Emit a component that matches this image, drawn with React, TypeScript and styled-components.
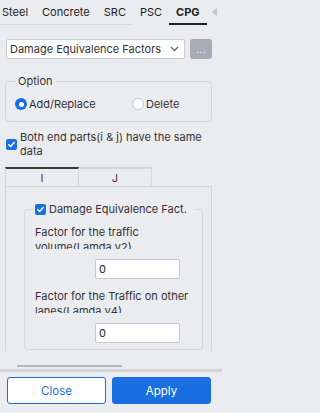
import React from "react";
import styled, { createGlobalStyle } from "styled-components";

const Global = createGlobalStyle`
  html, body { margin: 0; padding: 0; background: #ebecf0; }
  body { font-family: Inter, "Noto Sans", Arial, sans-serif; color: #333; }
  * { box-sizing: border-box; }
`;

const Page = styled.div`
  width: 222px;
  height: 413px;
  display: flex;
  flex-direction: column;
  background: #ebecf0;
  overflow: hidden;
  font-size: 11px;
`;

const TabBar = styled.div`
  height: 25px;
  display: flex;
  align-items: stretch;
  position: relative;
  flex-shrink: 0;
`;

const TabStrip = styled.div`
  display: flex;
  margin-left: -5px;
`;

const Tab = styled.div<{ $active?: boolean; $lined?: boolean }>`
  padding: 0 7px;
  display: flex;
  align-items: center;
  font-size: 11px;
  font-weight: ${(p) => (p.$active ? 700 : 400)};
  color: #222;
  border-bottom: ${(p) =>
    p.$active ? "2px solid #222" : p.$lined ? "1px solid #d9dadd" : "1px solid transparent"};
  padding-bottom: ${(p) => (p.$active ? 0 : 1)}px;
`;

const ScrollArrow = styled.div`
  position: absolute;
  right: 5px;
  top: 8px;
  width: 0;
  height: 0;
  border-top: 4px solid transparent;
  border-bottom: 4px solid transparent;
  border-right: 5px solid #c4c5c9;
`;

const Body = styled.div`
  flex: 1;
  display: flex;
  flex-direction: column;
  overflow: hidden;
`;

const ScrollArea = styled.div`
  height: 326px;
  overflow: hidden;
  padding: 14px 10px 0 5px;
  flex-shrink: 0;
`;

const SelectRow = styled.div`
  display: flex;
  gap: 5px;
  padding-left: 1px;
`;

const Select = styled.div`
  width: 180px;
  height: 20px;
  background: #fff;
  border: 1px solid #c9cacf;
  border-radius: 2px;
  display: flex;
  align-items: center;
  padding: 0 5px 0 3px;
  font-size: 11px;
  color: #333;
  justify-content: space-between;
  white-space: nowrap;
`;

const MoreButton = styled.div`
  width: 22px;
  height: 20px;
  background: #a7abb3;
  border-radius: 3px;
  color: #fff;
  font-size: 10px;
  display: flex;
  align-items: center;
  justify-content: center;
  letter-spacing: 0.3px;
`;

const Group = styled.fieldset`
  margin: 15px 0 0 0;
  padding: 9px 9px 10px 9px;
  border: 1px solid #d5d6da;
  border-radius: 4px;
  min-width: 0;
`;

const Legend = styled.legend`
  padding: 0 3px;
  font-size: 11px;
  color: #333;
  line-height: 14px;
`;

const RadioRow = styled.div`
  display: flex;
  align-items: center;
`;

const RadioItem = styled.label<{ $width?: number }>`
  display: flex;
  align-items: center;
  gap: 2px;
  width: ${(p) => (p.$width ? `${p.$width}px` : "auto")};
  font-size: 11px;
  line-height: 14px;
  color: #333;
`;

const RadioDot = styled.span<{ $checked?: boolean }>`
  width: 12px;
  height: 12px;
  border-radius: 50%;
  background: ${(p) => (p.$checked ? "#1a6fe0" : "#fff")};
  border: ${(p) => (p.$checked ? "none" : "1px solid #c9cacf")};
  display: flex;
  align-items: center;
  justify-content: center;
  &::after {
    content: "";
    display: ${(p) => (p.$checked ? "block" : "none")};
    width: 5px;
    height: 5px;
    border-radius: 50%;
    background: #fff;
  }
`;

const CheckRow = styled.label`
  display: flex;
  align-items: center;
  gap: 3px;
  margin-top: 8px;
  margin-left: 1px;
  font-size: 11px;
  line-height: 14px;
  color: #333;
`;

const CheckBox = styled.span`
  width: 11px;
  height: 11px;
  border-radius: 2px;
  background: #1a6fe0;
  flex-shrink: 0;
  display: flex;
  align-items: center;
  justify-content: center;
`;

const SubTabs = styled.div`
  display: flex;
  margin-top: 9px;
  width: 147px;
`;

const SubTab = styled.div<{ $active?: boolean }>`
  flex: 1;
  height: 19px;
  display: flex;
  align-items: center;
  justify-content: center;
  border-right: 1px solid #d5d6da;
  border-top: 2px solid ${(p) => (p.$active ? "#3a3a3a" : "#d5d6da")};
  border-left: ${(p) => (p.$active ? "1px solid #d5d6da" : "none")};
  font-size: 11px;
  color: #4a3550;
`;

const Panel = styled.div`
  border: 1px solid #d5d6da;
  border-bottom: none;
  padding: 15px 8px 0 18px;
  height: 180px;
`;

const Inner = styled.fieldset`
  margin: 0;
  padding: 9px 0 6px 10px;
  border: 1px solid #d5d6da;
  border-radius: 4px;
  min-width: 0;
`;

const InnerLegend = styled.legend`
  display: flex;
  align-items: center;
  gap: 3px;
  padding: 0 8px 0 1px;
  margin-left: -1px;
  font-size: 11px;
  line-height: 14px;
  color: #333;
  white-space: nowrap;
`;

const FieldLabel = styled.div`
  height: 24px;
  overflow: hidden;
  line-height: 15px;
  font-size: 11px;
  color: #333;
  padding-right: 4px;
`;

const FieldInput = styled.div`
  margin: 10px 0 0 60px;
  width: 85px;
  height: 20px;
  background: #fff;
  border: 1px solid #c9cacf;
  border-radius: 2px;
  display: flex;
  align-items: center;
  padding-left: 3px;
  font-size: 11px;
  color: #222;
`;

const FieldBlock = styled.div<{ $gap?: number }>`
  margin-top: ${(p) => p.$gap ?? 0}px;
`;

const HScroll = styled.div`
  height: 18px;
  display: flex;
  align-items: flex-end;
  padding: 0 0 2px 17px;
  flex-shrink: 0;
`;

const HThumb = styled.div`
  width: 105px;
  height: 2px;
  background: #b5b6ba;
`;

const Divider = styled.div`
  height: 3px;
  background: #d3d4d8;
  flex-shrink: 0;
`;

const Footer = styled.div`
  display: flex;
  gap: 6px;
  padding: 5px 11px 0 7px;
`;

const Button = styled.div<{ $primary?: boolean }>`
  flex: 1;
  height: 27px;
  border-radius: 3px;
  display: flex;
  align-items: center;
  justify-content: center;
  font-size: 11.5px;
  background: ${(p) => (p.$primary ? "#1a6fe0" : "#fff")};
  color: ${(p) => (p.$primary ? "#fff" : "#1a6fe0")};
  border: 1px solid #1a6fe0;
`;

const Check = () => (
  <svg width="9" height="9" viewBox="0 0 10 10">
    <path d="M2 5.2 L4.1 7.2 L8 2.8" fill="none" stroke="#fff" strokeWidth="1.7" strokeLinecap="round" strokeLinejoin="round" />
  </svg>
);

const Chevron = () => (
  <svg width="9" height="6" viewBox="0 0 9 6">
    <path d="M1 1 L4.5 4.5 L8 1" fill="none" stroke="#666" strokeWidth="1.3" />
  </svg>
);

export default function App() {
  return (
    <>
      <Global />
      <Page>
        <TabBar>
          <TabStrip>
            <Tab $lined>Steel</Tab>
            <Tab $lined>Concrete</Tab>
            <Tab $lined>SRC</Tab>
            <Tab>PSC</Tab>
            <Tab $active>CPG</Tab>
          </TabStrip>
          <ScrollArrow />
        </TabBar>
        <Body>
          <ScrollArea>
            <SelectRow>
              <Select>
                <span>Damage Equivalence Factors</span>
                <Chevron />
              </Select>
              <MoreButton>...</MoreButton>
            </SelectRow>
            <Group>
              <Legend>Option</Legend>
              <RadioRow>
                <RadioItem $width={117}>
                  <RadioDot $checked />
                  Add/Replace
                </RadioItem>
                <RadioItem>
                  <RadioDot />
                  Delete
                </RadioItem>
              </RadioRow>
            </Group>
            <CheckRow>
              <CheckBox>
                <Check />
              </CheckBox>
              <span>Both end parts(i &amp; j) have the same data</span>
            </CheckRow>
            <SubTabs>
              <SubTab $active>I</SubTab>
              <SubTab>J</SubTab>
            </SubTabs>
            <Panel>
              <Inner>
                <InnerLegend>
                  <CheckBox>
                    <Check />
                  </CheckBox>
                  Damage Equivalence Fact.
                </InnerLegend>
                <FieldBlock>
                  <FieldLabel>Factor for the traffic volume(Lamda v2)</FieldLabel>
                  <FieldInput>0</FieldInput>
                </FieldBlock>
                <FieldBlock $gap={10}>
                  <FieldLabel>Factor for the Traffic on other lanes(Lamda v4)</FieldLabel>
                  <FieldInput>0</FieldInput>
                </FieldBlock>
              </Inner>
            </Panel>
          </ScrollArea>
          <HScroll>
            <HThumb />
          </HScroll>
          <Divider />
          <Footer>
            <Button>Close</Button>
            <Button $primary>Apply</Button>
          </Footer>
        </Body>
      </Page>
    </>
  );
}
